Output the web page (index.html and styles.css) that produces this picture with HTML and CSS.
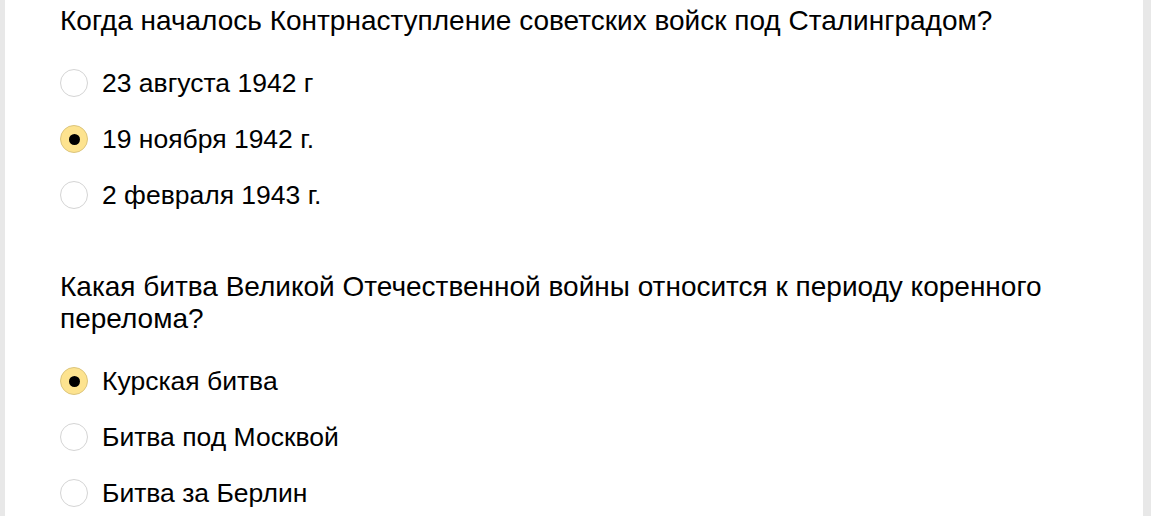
FILE: index.html
```html
<!DOCTYPE html>
<html lang="ru">
<head>
<meta charset="utf-8">
<link rel="stylesheet" href="styles.css">
</head>
<body>
<div class="page">
  <div class="card">
    <div class="question">
      <div class="q-title">Когда началось Контрнаступление советских войск под Сталинградом?</div>
      <div class="options">
        <label class="option"><span class="radio"></span><span class="opt-text">23 августа 1942 г</span></label>
        <label class="option"><span class="radio checked"></span><span class="opt-text">19 ноября 1942 г.</span></label>
        <label class="option"><span class="radio"></span><span class="opt-text">2 февраля 1943 г.</span></label>
      </div>
    </div>
    <div class="question">
      <div class="q-title">Какая битва Великой Отечественной войны относится к периоду коренного перелома?</div>
      <div class="options">
        <label class="option"><span class="radio checked"></span><span class="opt-text">Курская битва</span></label>
        <label class="option"><span class="radio"></span><span class="opt-text">Битва под Москвой</span></label>
        <label class="option"><span class="radio"></span><span class="opt-text">Битва за Берлин</span></label>
      </div>
    </div>
  </div>
</div>
</body>
</html>
```
FILE: styles.css
```css
html, body {
  margin: 0;
  padding: 0;
  background: #ffffff;
}
body {
  font-family: "Liberation Sans", Arial, sans-serif;
  color: #000;
}
.page {
  width: 1151px;
  height: 516px;
  overflow: hidden;
  box-sizing: border-box;
  border-left: 5px solid #e8e8e8;
  border-right: 8px solid #e8e8e8;
}
.card {
  display: flex;
  flex-direction: column;
  gap: 48px;
  padding: 5px 60px 0 55px;
}
.q-title {
  font-size: 28px;
  line-height: 32px;
}
.options {
  display: flex;
  flex-direction: column;
  margin-top: 18px;
}
.option {
  display: flex;
  align-items: center;
  gap: 14px;
  height: 56px;
  line-height: 56px;
  font-size: 26.5px;
}
.radio {
  width: 26px;
  height: 26px;
  border: 1px solid #d4d4d4;
  border-radius: 50%;
  background: #fff;
  flex: none;
  display: flex;
  align-items: center;
  justify-content: center;
}
.radio.checked {
  background: #fde38f;
  border-color: #dcc57d;
}
.radio.checked::after {
  content: "";
  width: 11px;
  height: 11px;
  border-radius: 50%;
  background: #000;
}
```
